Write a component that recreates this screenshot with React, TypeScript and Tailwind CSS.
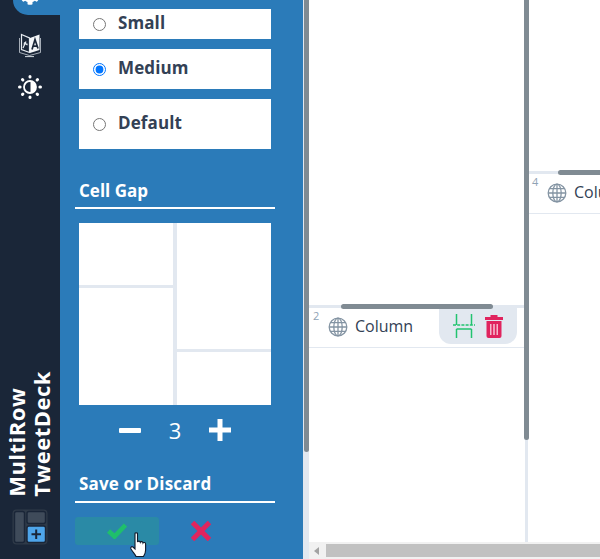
import React from 'react';
import { FaCog } from 'react-icons/fa';

function TranslateIcon() {
  return (
    <svg className="block" width="24" height="25" viewBox="0 0 24 25" fill="none">
      <path d="M3.5 1.5 L11.5 5 V19.5 L3.5 16.5 Z" stroke="#e8edf2" strokeWidth="1.2" fill="#1a2638" />
      <path d="M12 5 L21.5 1.5 V17 L12 20 Z" fill="#f4f6f8" />
      <path d="M1.5 5 V19.5 L11.5 22.5 L22.5 19.5 V5" stroke="#c9d0d8" strokeWidth="0.8" />
      <path d="M7 23.6 H16" stroke="#e8edf2" strokeWidth="0.9" />
      <path d="M14 16.5 L17 6.5 L20 15.5 M15 13.2 H19" stroke="#1a2638" strokeWidth="1.7" />
      <path d="M5 15 L8 8.5 M6 9.5 L9.5 12 M5.5 11 H9.5" stroke="#e8edf2" strokeWidth="1.2" />
    </svg>
  );
}

function ContrastIcon() {
  return (
    <svg className="block" width="24" height="24" viewBox="0 0 24 24" fill="#ffffff">
      <circle cx="12" cy="12" r="6" fill="none" stroke="#ffffff" strokeWidth="1.8" />
      <path d="M12.5 6.5 A5.5 5.5 0 0 1 12.5 17.5 Z" />
      <rect x="10.5" y="0" width="3" height="3.6" rx="1.5" />
      <rect x="10.5" y="20.4" width="3" height="3.6" rx="1.5" />
      <rect x="0" y="10.5" width="3.6" height="3" rx="1.5" />
      <rect x="20.4" y="10.5" width="3.6" height="3" rx="1.5" />
      <rect x="3.2" y="3" width="3" height="3.6" rx="1.5" transform="rotate(-45 4.7 4.8)" />
      <rect x="17.8" y="3" width="3" height="3.6" rx="1.5" transform="rotate(45 19.3 4.8)" />
      <rect x="3.2" y="17.4" width="3" height="3.6" rx="1.5" transform="rotate(45 4.7 19.2)" />
      <rect x="17.8" y="17.4" width="3" height="3.6" rx="1.5" transform="rotate(-45 19.3 19.2)" />
    </svg>
  );
}

function LogoIcon() {
  return (
    <svg className="block" width="36" height="36" viewBox="0 0 36 36" fill="none">
      <rect x="0.5" y="0.5" width="35" height="35" rx="4" fill="#2f3a48" />
      <rect x="2.5" y="2.5" width="10" height="31" rx="2" fill="#3f4b5a" stroke="#1a2638" strokeWidth="1.4" />
      <rect x="15" y="2.5" width="18.5" height="12" rx="2" fill="#3f4b5a" stroke="#1a2638" strokeWidth="1.4" />
      <rect x="15" y="17" width="18.5" height="16.5" rx="2" fill="#4ea5ea" stroke="#1a2638" strokeWidth="1.4" />
      <path d="M24.2 20.5 V30 M19.5 25.2 H29" stroke="#1a2638" strokeWidth="2" />
    </svg>
  );
}

function GlobeIcon() {
  return (
    <svg className="block" width="20" height="20" viewBox="0 0 20 20" fill="none" stroke="#8494a3" strokeWidth="1.3">
      <circle cx="10" cy="10" r="8.8" />
      <ellipse cx="10" cy="10" rx="4.2" ry="8.8" />
      <path d="M10 1.2 V18.8 M1.2 10 H18.8 M2.5 5.6 H17.5 M2.5 14.4 H17.5" />
    </svg>
  );
}

function WidthIcon() {
  return (
    <svg className="block" width="22" height="24" viewBox="0 0 22 24" fill="none" stroke="#22c36f" strokeWidth="1.5">
      <path d="M3.5 0 V11 M18.5 0 V11 M3.5 15 V24 M18.5 15 V24" />
      <path d="M3.5 15 H18.5" />
      <path d="M0 11 H22" strokeDasharray="3 1.2" />
    </svg>
  );
}

function TrashIcon() {
  return (
    <svg className="block" width="18" height="23" viewBox="0 0 18 23" fill="#e0245e">
      <path d="M5.5 0 H12.5 V2 H18 V5 H0 V2 H5.5 Z" />
      <path d="M1.5 6 H16.5 V21 A2 2 0 0 1 14.5 23 H3.5 A2 2 0 0 1 1.5 21 Z" />
      <path d="M5 9 H6.5 V20 H5 Z M8.2 9 H9.8 V20 H8.2 Z M11.5 9 H13 V20 H11.5 Z" fill="#f5b8cc" />
    </svg>
  );
}

function HandCursor() {
  return (
    <svg className="block" width="18" height="26" viewBox="0 0 18 26">
      <path
        d="M5 1.5 C5 .5 7.5 .5 7.5 1.5 V10 C8 8.8 10 8.8 10.3 10.3 C10.8 9.2 12.8 9.4 13 11 C13.6 10 15.6 10.4 15.6 12 V18 C15.6 21 14.5 22.5 13.5 24.5 H6 C5 22 3 20.5 1 17 C.2 15.5 1.5 14 3 15 L5 17 Z"
        fill="#ffffff"
        stroke="#0f1a2b"
        strokeWidth="1.1"
      />
    </svg>
  );
}

function Sidebar() {
  return (
    <div className="w-[60px] h-full shrink-0 bg-[#1a2638] flex flex-col items-center">
      <div className="w-[47px] h-[15px] self-end bg-[#2b7bb9] rounded-bl-[15px] overflow-hidden flex items-end justify-center pb-[10px] pr-[14px] text-white">
        <FaCog className="w-[20px] h-[20px] shrink-0" />
      </div>
      <div className="mt-[18px]"><TranslateIcon /></div>
      <div className="mt-[17px]"><ContrastIcon /></div>
      <div className="mt-auto -translate-x-[1px] flex flex-col items-start rotate-180 [writing-mode:vertical-rl] text-white font-bold text-[22px] leading-[25px] tracking-[0.5px]">
        <span className="whitespace-nowrap">MultiRow</span>
        <span className="whitespace-nowrap">TweetDeck</span>
      </div>
      <div className="mt-[12px] mb-[14px]"><LogoIcon /></div>
    </div>
  );
}

function SizeRow({ label, height, checked }: { label: string; height: string; checked?: boolean }) {
  return (
    <label className={`${height} mx-[4px] pb-[2px] bg-white flex items-center pl-[14px] gap-[12px] text-[#334155] text-[17px] tracking-[0.1px] font-bold`}>
      <input type="radio" name="size" defaultChecked={checked} className="w-[13px] h-[13px] m-0 mt-[2px]" />
      <span>{label}</span>
    </label>
  );
}

function SettingsPanel() {
  return (
    <div className="w-[243px] h-full shrink-0 bg-[#2b7bb9] pl-[15px] pr-[28px] pt-[9px] overflow-hidden">
      <div className="flex flex-col gap-[10px]">
        <SizeRow label="Small" height="h-[30px]" />
        <SizeRow label="Medium" height="h-[40px]" checked />
        <SizeRow label="Default" height="h-[50px]" />
      </div>

      <div className="mt-[29px] px-[4px] h-[31px] text-white text-[17px] font-bold leading-[26px] border-b-2 border-white">Cell Gap</div>

      <div className="mt-[14px] mx-[4px] h-[182px] bg-[#e2e8f0] grid grid-cols-2 gap-x-[4px]">
        <div className="flex flex-col gap-[3px]">
          <div className="h-[62px] bg-white" />
          <div className="flex-1 bg-white" />
        </div>
        <div className="flex flex-col gap-[3px]">
          <div className="h-[126px] bg-white" />
          <div className="flex-1 bg-white" />
        </div>
      </div>

      <div className="mt-[10px] h-[30px] flex items-center justify-center text-white">
        <button className="w-[45px] flex justify-center">
          <span className="block w-[22px] h-[5px] bg-white rounded-[1px]" />
        </button>
        <span className="w-[45px] text-center text-[22px] leading-[30px]">3</span>
        <button className="w-[45px] flex justify-center">
          <svg className="block" width="22" height="22" viewBox="0 0 22 22" fill="#ffffff">
            <path d="M8.5 0 H13.5 V8.5 H22 V13.5 H13.5 V22 H8.5 V13.5 H0 V8.5 H8.5 Z" />
          </svg>
        </button>
      </div>

      <div className="mt-[29px] px-[4px] h-[29px] text-white text-[17px] tracking-[0.15px] font-bold leading-[20px] border-b-2 border-white whitespace-nowrap">Save or Discard</div>

      <div className="mt-[14px] flex items-center">
        <button className="relative w-[84px] h-[28px] bg-[#2a8aa6] rounded-[3px] flex items-center justify-center">
          <svg className="block" width="20" height="16" viewBox="0 0 20 16" fill="none" stroke="#1fbf6b" strokeWidth="4.6">
            <path d="M1.5 8 L7.5 13.5 L18.5 2" />
          </svg>
          <span className="absolute left-[55px] top-[15px]"><HandCursor /></span>
        </button>
        <button className="ml-[32px]">
          <svg className="block" width="20" height="20" viewBox="0 0 20 20" fill="none" stroke="#e0245e" strokeWidth="5">
            <path d="M1.5 1.5 L18.5 18.5 M18.5 1.5 L1.5 18.5" />
          </svg>
        </button>
      </div>
    </div>
  );
}

function ColumnHeader({ index, handleLeft, actions }: { index: number; handleLeft: string; actions?: boolean }) {
  return (
    <div className="relative h-[43px] shrink-0 border-t-[3px] border-b border-[#e2e8f0] bg-white flex pl-[4px]">
      <span className={`absolute ${handleLeft} -top-[4px] w-[152px] h-[5px] rounded-full bg-[#808b93]`} />
      <span className="w-[15px] shrink-0 text-[11px] leading-[13px] mt-[1px] text-[#8fa3b5]">{index}</span>
      <div className="mt-[9px] shrink-0"><GlobeIcon /></div>
      <span className="ml-[7px] mt-[4px] text-[16px] leading-[28px] text-[#334155] whitespace-nowrap">Column</span>
      {actions && (
        <div className="ml-auto mr-[8px] w-[78px] h-[36px] bg-[#e2e8f0] rounded-b-xl flex items-center justify-center gap-[10px] shrink-0">
          <WidthIcon />
          <TrashIcon />
        </div>
      )}
    </div>
  );
}

function Columns() {
  return (
    <div className="relative flex-1 min-w-0 h-full flex">
      <div className="relative w-[6px] h-full shrink-0 bg-[#e2e8f0]">
        <span className="absolute left-[1px] top-0 w-[5px] h-[452px] rounded-b-full bg-[#808b93]" />
      </div>
      <div className="flex-1 min-w-0 h-full flex flex-col">
        <div className="flex-1 min-h-0 flex">
          <div className="w-[216px] shrink-0 flex flex-col">
            <div className="h-[305px] shrink-0" />
            <ColumnHeader index={2} handleLeft="left-[32px]" actions />
          </div>
          <div className="relative z-10 w-[3px] shrink-0 bg-[#e2e8f0]">
            <span className="absolute -left-[1px] top-0 w-[5px] h-[440px] rounded-b-full bg-[#808b93]" />
          </div>
          <div className="flex-1 min-w-0 overflow-hidden flex flex-col">
            <div className="h-[171px] shrink-0" />
            <ColumnHeader index={4} handleLeft="left-[30px]" />
          </div>
        </div>
        <div className="h-[17px] shrink-0 bg-[#f1f1f1] flex items-center">
          <svg className="ml-[5px]" width="6" height="8" viewBox="0 0 6 8" fill="#a3a3a3">
            <path d="M5 0 V8 L0 4 Z" />
          </svg>
          <div className="ml-[6px] flex-1 h-[13px] bg-[#c1c1c1]" />
        </div>
      </div>
    </div>
  );
}

export default function App() {
  return (
    <div className="w-[600px] h-[559px] overflow-hidden flex bg-white font-['Open_Sans','Noto_Sans',sans-serif]">
      <Sidebar />
      <SettingsPanel />
      <Columns />
    </div>
  );
}
